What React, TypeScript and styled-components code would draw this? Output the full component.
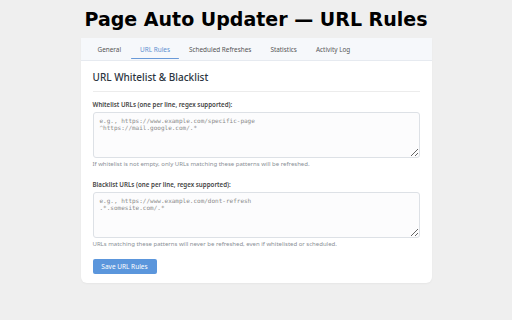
import React from 'react';
import styled, { createGlobalStyle } from 'styled-components';

const GlobalStyle = createGlobalStyle`
  html, body {
    margin: 0;
    padding: 0;
    background: #efefef;
  }
  body {
    font-family: "Noto Sans", "Open Sans", sans-serif;
  }
`;

const Page = styled.div`
  width: 512px;
  height: 320px;
  display: flex;
  flex-direction: column;
  align-items: center;
`;

const Title = styled.h1`
  font-family: "DejaVu Sans", sans-serif;
  font-weight: bold;
  font-size: 19px;
  line-height: 24px;
  margin: 7px 0 7px;
  color: #000;
`;

const Card = styled.div`
  width: 351px;
  background: #fff;
  border-radius: 0 0 6px 6px;
  box-shadow: 0 1px 2px rgba(0, 0, 0, 0.04);
`;

const TabBar = styled.div`
  display: flex;
  gap: 1px;
  height: 22px;
  padding: 0 8px;
  background: #f6f8fb;
  border-bottom: 1px solid #e6eaf0;
`;

const Tab = styled.div<{ $active?: boolean }>`
  position: relative;
  display: flex;
  align-items: center;
  padding: 0 9px;
  font-size: 6.4px;
  color: ${(p) => (p.$active ? '#5d8fd0' : '#555')};
  &::after {
    content: '';
    display: ${(p) => (p.$active ? 'block' : 'none')};
    position: absolute;
    left: 0;
    right: 0;
    bottom: 1px;
    height: 1.5px;
    border-radius: 1px;
    background: #6a9ad8;
  }
`;

const Body = styled.div`
  padding: 9px 12px 9px;
`;

const Heading = styled.h2`
  margin: 0;
  font-size: 10px;
  font-weight: 500;
  line-height: 14px;
  color: #2b3440;
  padding-bottom: 7px;
  border-bottom: 1px solid #ececec;
  margin-bottom: 9px;
`;

const Field = styled.div<{ $space: number }>`
  display: flex;
  flex-direction: column;
  margin-bottom: ${(p) => p.$space}px;
`;

const Label = styled.label`
  font-size: 6.2px;
  font-weight: 600;
  color: #444;
  line-height: 8px;
  margin-bottom: 3px;
`;

const TextArea = styled.textarea`
  box-sizing: border-box;
  width: 100%;
  height: 46px;
  border: 1px solid #dde1e6;
  border-radius: 3px;
  background: #fcfcfd;
  padding: 4px 6px;
  font-family: "DejaVu Sans Mono", monospace;
  font-size: 6px;
  line-height: 7px;
  resize: vertical;
  outline: none;
  &::placeholder {
    color: #8a8a8a;
  }
`;

const Help = styled.div`
  font-size: 6px;
  color: #8a8f96;
  line-height: 8px;
  margin-top: 2px;
`;

const SaveButton = styled.button`
  display: block;
  width: 64px;
  height: 15px;
  border: none;
  border-radius: 2px;
  background: #5b96dc;
  color: #fff;
  font-family: "Noto Sans", sans-serif;
  font-size: 6.5px;
  padding: 0;
  cursor: pointer;
`;

const tabs = ['General', 'URL Rules', 'Scheduled Refreshes', 'Statistics', 'Activity Log'];

const App = () => {
  return (
    <Page>
      <GlobalStyle />
      <Title>Page Auto Updater — URL Rules</Title>
      <Card>
        <TabBar>
          {tabs.map((t) => (
            <Tab key={t} $active={t === 'URL Rules'}>
              {t}
            </Tab>
          ))}
        </TabBar>
        <Body>
          <Heading>URL Whitelist &amp; Blacklist</Heading>
          <Field $space={13}>
            <Label>Whitelist URLs (one per line, regex supported):</Label>
            <TextArea
              placeholder={'e.g., https://www.example.com/specific-page\n^https://mail.google.com/.*'}
            />
            <Help>If whitelist is not empty, only URLs matching these patterns will be refreshed.</Help>
          </Field>
          <Field $space={11}>
            <Label>Blacklist URLs (one per line, regex supported):</Label>
            <TextArea placeholder={'e.g., https://www.example.com/dont-refresh\n.*.somesite.com/.*'} />
            <Help>URLs matching these patterns will never be refreshed, even if whitelisted or scheduled.</Help>
          </Field>
          <SaveButton>Save URL Rules</SaveButton>
        </Body>
      </Card>
    </Page>
  );
};

export default App;
